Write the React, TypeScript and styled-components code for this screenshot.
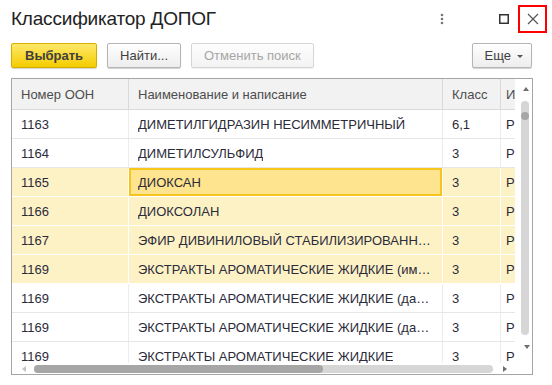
import * as React from 'react';
import styled, { createGlobalStyle } from 'styled-components';

const GlobalStyle = createGlobalStyle`
    html, body {
        margin: 0;
        padding: 0;
        background: #fff;
        font-family: "Liberation Sans", Arial, sans-serif;
    }
`;

interface RowData {
    code: string;
    name: string;
    cls: string;
    extra: string;
    marked?: boolean;
    current?: boolean;
}

const ROWS: RowData[] = [
    { code: "1163", name: "ДИМЕТИЛГИДРАЗИН НЕСИММЕТРИЧНЫЙ", cls: "6,1", extra: "Р" },
    { code: "1164", name: "ДИМЕТИЛСУЛЬФИД", cls: "3", extra: "Р" },
    { code: "1165", name: "ДИОКСАН", cls: "3", extra: "Р", marked: true, current: true },
    { code: "1166", name: "ДИОКСОЛАН", cls: "3", extra: "Р", marked: true },
    { code: "1167", name: "ЭФИР ДИВИНИЛОВЫЙ СТАБИЛИЗИРОВАННЫЙ", cls: "3", extra: "Р", marked: true },
    { code: "1169", name: "ЭКСТРАКТЫ АРОМАТИЧЕСКИЕ ЖИДКИЕ (имеющие давление пара)", cls: "3", extra: "Р", marked: true },
    { code: "1169", name: "ЭКСТРАКТЫ АРОМАТИЧЕСКИЕ ЖИДКИЕ (давление пара при 50 °С)", cls: "3", extra: "Р" },
    { code: "1169", name: "ЭКСТРАКТЫ АРОМАТИЧЕСКИЕ ЖИДКИЕ (давление пара при 50 °С)", cls: "3", extra: "Р" },
    { code: "1169", name: "ЭКСТРАКТЫ АРОМАТИЧЕСКИЕ ЖИДКИЕ", cls: "3", extra: "Р" },
];

const COLS = [117, 314, 58, 60];

const Window = styled.div`
    width: 552px;
    height: 385px;
    box-sizing: border-box;
    padding: 0 20px 0 11px;
    display: flex;
    flex-direction: column;
    overflow: hidden;
    color: #333;
`;

const TitleBar = styled.div`
    height: 43px;
    display: flex;
    align-items: flex-start;
    margin-right: -20px;
`;

const Title = styled.h1`
    flex: 1;
    margin: 8px 0 0 0;
    font-size: 19px;
    font-weight: normal;
    color: #222;
    letter-spacing: -0.2px;
`;

const TitleIcon = styled.div<{ framed?: boolean }>`
    width: 29px;
    height: 28px;
    margin-top: 5px;
    box-sizing: border-box;
    display: flex;
    align-items: center;
    justify-content: center;
    border: 2px solid ${p => p.framed ? '#ff0000' : 'transparent'};
`;

const TitleIcons = styled.div`
    display: flex;
    margin-right: 5px;
`;

const Toolbar = styled.div`
    display: flex;
    gap: 10px;
    height: 25px;
    margin-bottom: 10px;
`;

const Button = styled.button<{ kind?: 'default' | 'normal' | 'disabled' }>`
    height: 25px;
    box-sizing: border-box;
    padding: 0 12px;
    font-family: "Liberation Sans", Arial, sans-serif;
    font-size: 13px;
    font-weight: ${p => p.kind === 'default' ? 'bold' : 'normal'};
    border-radius: 2px;
    display: flex;
    align-items: center;
    gap: 6px;
    color: ${p => p.kind === 'disabled' ? '#a6a6a6' : '#404040'};
    border: 1px solid ${p => p.kind === 'default' ? '#d3b000' : p.kind === 'disabled' ? '#d6d6d6' : '#b5b5b5'};
    background: ${p => p.kind === 'default'
        ? 'linear-gradient(#ffe86a, #f5cc00)'
        : p.kind === 'disabled' ? 'linear-gradient(#fdfdfd, #f3f3f3)' : 'linear-gradient(#ffffff, #ededed)'};
    box-shadow: 0 1px 1px ${p => p.kind === 'disabled' ? 'rgba(0,0,0,0.06)' : 'rgba(0,0,0,0.18)'};
`;

const Spacer = styled.div`
    flex: 1;
`;

const Grid = styled.div`
    width: 522px;
    height: 297px;
    box-sizing: border-box;
    border: 1px solid #a5a5a5;
    display: flex;
    flex-direction: column;
`;

const GridTop = styled.div`
    flex: 1;
    display: flex;
    min-height: 0;
`;

const Columns = styled.div`
    flex: 1;
    overflow: hidden;
`;

const Row = styled.div<{ header?: boolean; marked?: boolean }>`
    display: flex;
    height: ${p => p.header ? 30 : 28}px;
    border-bottom: 1px solid ${p => p.header ? '#d9d9d9' : p.marked ? '#ffffff' : '#e6e6e6'};
    background: ${p => p.header ? '#f2f2f2' : p.marked ? '#fdf2c6' : '#ffffff'};
    color: ${p => p.header ? '#4d4d4d' : '#2b2b3a'};
    font-size: 13px;
`;

const Cell = styled.div<{ header?: boolean; marked?: boolean; current?: boolean; narrow?: boolean }>`
    flex: none;
    box-sizing: border-box;
    padding: 0 ${p => p.narrow ? 5 : 9}px;
    display: flex;
    align-items: center;
    border-right: 1px solid ${p => p.header ? '#d9d9d9' : p.marked ? '#ffffff' : '#ececec'};
    overflow: hidden;
    white-space: nowrap;
    background: ${p => p.current ? '#fee48e' : 'transparent'};
    box-shadow: ${p => p.current ? 'inset 0 0 0 2px #f8c51c' : 'none'};
    & > span {
        overflow: hidden;
        text-overflow: ellipsis;
        display: block;
        min-width: 0;
    }
`;

const VScroll = styled.div`
    width: 17px;
    display: flex;
    flex-direction: column;
    align-items: center;
    padding: 8px 0 0 5px;
    box-sizing: border-box;
`;

const Arrow = styled.div<{ dir: 'up' | 'down' | 'left' | 'right' }>`
    width: 0;
    height: 0;
    flex: none;
    border: 3px solid transparent;
    ${p => p.dir === 'up' && 'border-bottom: 4px solid #6e6e6e; border-top-width: 0;'}
    ${p => p.dir === 'down' && 'border-top: 4px solid #6e6e6e; border-bottom-width: 0;'}
    ${p => p.dir === 'left' && 'border-right: 4px solid #c2c2c2; border-left-width: 0;'}
    ${p => p.dir === 'right' && 'border-left: 4px solid #6e6e6e; border-right-width: 0;'}
`;

const VTrack = styled.div`
    width: 8px;
    height: 234px;
    margin: 10px 2px 0 0;
    border-radius: 4px;
    background: #d6d6d6;
    position: relative;
`;

const VThumb = styled.div`
    position: absolute;
    left: 0;
    top: 11px;
    width: 8px;
    height: 8px;
    border-radius: 4px;
    background: #a6a6a6;
`;

const VBottom = styled.div`
    margin-top: 10px;
    margin-left: 2px;
`;

const HScroll = styled.div`
    height: 11px;
    display: flex;
    align-items: center;
    padding-left: 10px;
`;

const HTrack = styled.div`
    width: 459px;
    height: 8px;
    margin: 0 10px 0 8px;
    border-radius: 4px;
    background: #d6d6d6;
    display: flex;
`;

const HThumb = styled.div`
    width: 289px;
    height: 8px;
    border-radius: 4px;
    background: #a6a6a6;
`;

const Caret = styled.span`
    width: 0;
    height: 0;
    border-left: 3px solid transparent;
    border-right: 3px solid transparent;
    border-top: 3px solid #555;
    margin-top: 1px;
`;

export default function App() {
    return (
        <>
            <GlobalStyle />
            <Window>
                <TitleBar>
                    <Title>Классификатор ДОПОГ</Title>
                    <TitleIcons>
                        <TitleIcon style={{ marginRight: 33 }}>
                            <svg width="4" height="12" viewBox="0 0 4 12">
                                <circle cx="2" cy="2" r="1.3" fill="#777" />
                                <circle cx="2" cy="6" r="1.3" fill="#777" />
                                <circle cx="2" cy="10" r="1.3" fill="#777" />
                            </svg>
                        </TitleIcon>
                        <TitleIcon>
                            <svg width="10" height="10" viewBox="0 0 10 10">
                                <rect x="0.75" y="0.75" width="8.5" height="8.5" fill="none" stroke="#333" strokeWidth="1.5" />
                            </svg>
                        </TitleIcon>
                        <TitleIcon framed>
                            <svg width="12" height="12" viewBox="0 0 12 12">
                                <path d="M1 1 L11 11 M11 1 L1 11" stroke="#555" strokeWidth="1.2" />
                            </svg>
                        </TitleIcon>
                    </TitleIcons>
                </TitleBar>
                <Toolbar>
                    <Button kind="default" style={{ padding: '0 13px' }}>Выбрать</Button>
                    <Button kind="normal">Найти...</Button>
                    <Button kind="disabled">Отменить поиск</Button>
                    <Spacer />
                    <Button kind="normal" style={{ padding: '0 8px 0 12px' }}>Еще <Caret /></Button>
                </Toolbar>
                <Grid>
                    <GridTop>
                        <Columns>
                            <Row header>
                                <Cell header style={{ width: COLS[0] }}>Номер ООН</Cell>
                                <Cell header style={{ width: COLS[1] }}>Наименование и написание</Cell>
                                <Cell header style={{ width: COLS[2] }}>Класс</Cell>
                                <Cell header narrow style={{ width: COLS[3] }}>Идентификатор</Cell>
                            </Row>
                            {ROWS.map((r, i) => (
                                <Row key={i} marked={r.marked}>
                                    <Cell marked={r.marked} style={{ width: COLS[0] }}><span>{r.code}</span></Cell>
                                    <Cell marked={r.marked} current={r.current} style={{ width: COLS[1] }}><span>{r.name}</span></Cell>
                                    <Cell marked={r.marked} style={{ width: COLS[2] }}><span>{r.cls}</span></Cell>
                                    <Cell marked={r.marked} narrow style={{ width: COLS[3] }}><span>{r.extra}</span></Cell>
                                </Row>
                            ))}
                        </Columns>
                        <VScroll>
                            <Arrow dir="up" />
                            <VTrack><VThumb /></VTrack>
                            <VBottom><Arrow dir="down" /></VBottom>
                        </VScroll>
                    </GridTop>
                    <HScroll>
                        <Arrow dir="left" />
                        <HTrack><HThumb /></HTrack>
                        <Arrow dir="right" />
                    </HScroll>
                </Grid>
            </Window>
        </>
    );
}
